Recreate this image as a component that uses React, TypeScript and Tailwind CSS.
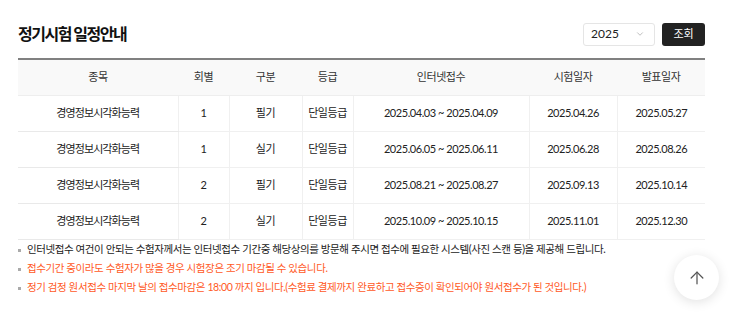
import React, { useState } from 'react';
import { ChevronDown, ArrowUp } from 'lucide-react';

type ExamRow = {
  name: string;
  round: number;
  kind: string;
  grade: string;
  apply: string;
  examDate: string;
  resultDate: string;
};

const ROWS: ExamRow[] = [
  { name: '경영정보시각화능력', round: 1, kind: '필기', grade: '단일등급', apply: '2025.04.03 ~ 2025.04.09', examDate: '2025.04.26', resultDate: '2025.05.27' },
  { name: '경영정보시각화능력', round: 1, kind: '실기', grade: '단일등급', apply: '2025.06.05 ~ 2025.06.11', examDate: '2025.06.28', resultDate: '2025.08.26' },
  { name: '경영정보시각화능력', round: 2, kind: '필기', grade: '단일등급', apply: '2025.08.21 ~ 2025.08.27', examDate: '2025.09.13', resultDate: '2025.10.14' },
  { name: '경영정보시각화능력', round: 2, kind: '실기', grade: '단일등급', apply: '2025.10.09 ~ 2025.10.15', examDate: '2025.11.01', resultDate: '2025.12.30' },
];

const HEADERS = ['종목', '회별', '구분', '등급', '인터넷접수', '시험일자', '발표일자'];
const COL_WIDTHS = ['w-[160px]', 'w-[51px]', 'w-[73px]', 'w-[51px]', 'w-[176px]', 'w-[88px]', 'w-[88px]'];

const NOTES = [
  { text: '인터넷접수 여건이 안되는 수험자께서는 인터넷접수 기간중 해당상의를 방문해 주시면 접수에 필요한 시스템(사진 스캔 등)을 제공해 드립니다.', warn: false },
  { text: '접수기간 중이라도 수험자가 많을 경우 시험장은 조기 마감될 수 있습니다.', warn: true },
  { text: '정기 검정 원서접수 마지막 날의 접수마감은 18:00 까지 입니다.(수험료 결제까지 완료하고 접수증이 확인되어야 원서접수가 된 것입니다.)', warn: true },
];

export default function App() {
  const [year, setYear] = useState('2025');

  return (
    <div className="relative w-[743px] h-[319px] bg-white font-['Lato','Noto_Sans_CJK_KR',sans-serif] text-[#222]">
      <div className="pl-[18px] pr-[38px] pt-[22px]">
        <div className="flex items-center justify-between h-[24px]">
          <h2 className="text-[16px] font-bold tracking-[-1.5px] text-[#111] leading-none">정기시험 일정안내</h2>
          <div className="flex items-center gap-[7px]">
            <label className="relative flex items-center w-[72px] h-[23px] border border-[#e5e5e5] rounded-[3px] bg-white">
              <select
                value={year}
                onChange={(e) => setYear(e.target.value)}
                className="appearance-none w-full h-full bg-transparent pl-[7px] text-[12px] text-[#222] outline-none"
              >
                <option value="2025">2025</option>
                <option value="2024">2024</option>
              </select>
              <ChevronDown className="absolute right-[9px] w-[10px] h-[10px] text-[#999] pointer-events-none" strokeWidth={1.5} />
            </label>
            <button className="w-[43px] h-[23px] rounded-[3px] bg-[#222] text-white text-[11px]">조회</button>
          </div>
        </div>

        <table className="mt-[12px] w-[687px] table-fixed border-collapse border-t-2 border-t-[#808080] text-[11px] tracking-[-0.45px]">
          <colgroup>
            {COL_WIDTHS.map((w, i) => (
              <col key={i} className={w} />
            ))}
          </colgroup>
          <thead>
            <tr className="h-[36px] bg-[#f9f9f9]">
              {HEADERS.map((h) => (
                <th key={h} className="font-normal text-[#333] border-b border-[#eee]">{h}</th>
              ))}
            </tr>
          </thead>
          <tbody>
            {ROWS.map((r, i) => (
              <tr key={i} className="h-[36px] text-center">
                <td className="border-b border-[#e9e9e9] tracking-[-0.9px]">{r.name}</td>
                <td className="border-b border-l border-[#f0f0f0]">{r.round}</td>
                <td className="border-b border-l border-[#f0f0f0]">{r.kind}</td>
                <td className="border-b border-l border-[#f0f0f0]">{r.grade}</td>
                <td className="border-b border-l border-[#f0f0f0]">{r.apply}</td>
                <td className="border-b border-l border-[#f0f0f0]">{r.examDate}</td>
                <td className="border-b border-l border-[#f0f0f0]">{r.resultDate}</td>
              </tr>
            ))}
          </tbody>
        </table>

        <ul className="mt-[1px] text-[10.5px] tracking-[-0.4px]">
          {NOTES.map((n, i) => (
            <li key={i} className={`flex items-center h-[19px] ${n.warn ? 'text-[#ff5a1f]' : 'text-[#222]'}`}>
              <span className="mr-[6px] inline-block w-[3px] h-[3px] bg-[#aaa]" />
              {n.text}
            </li>
          ))}
        </ul>
      </div>

      <button className="absolute left-[674px] top-[255px] w-[45px] h-[45px] rounded-full bg-white shadow-[0_2px_12px_rgba(0,0,0,0.12)] flex items-center justify-center">
        <ArrowUp className="w-[20px] h-[20px] text-[#555]" strokeWidth={1.5} />
      </button>
    </div>
  );
}
